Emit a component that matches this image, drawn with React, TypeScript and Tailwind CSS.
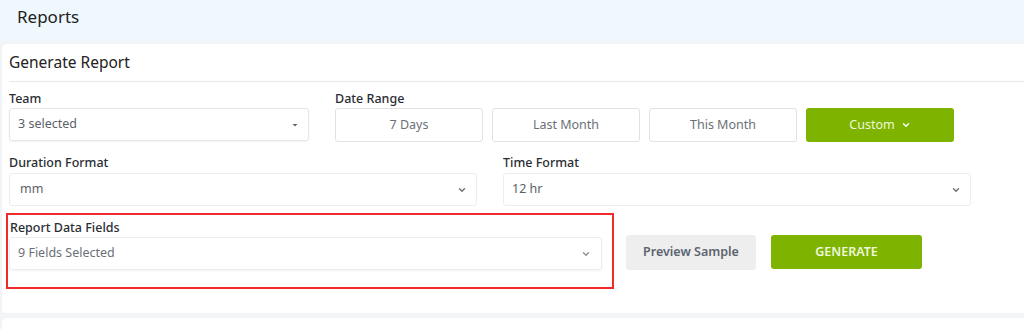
import React from "react";

const Chevron = ({ className = "" }: { className?: string }) => (
  <svg width="10" height="10" viewBox="0 0 10 10" className={className} fill="none" stroke="currentColor" strokeWidth="1.4" strokeLinecap="round" strokeLinejoin="round">
    <path d="M2.5 3.8 L5 6.2 L7.5 3.8" />
  </svg>
);

const Caret = () => (
  <svg width="8" height="8" viewBox="0 0 8 8" className="text-[#5f6670]">
    <path d="M1.5 3 L6.5 3 L4 5.5 Z" fill="currentColor" />
  </svg>
);

export default function App() {
  return (
    <div className="w-[1024px] h-[329px] overflow-hidden bg-[#f1f5f8] font-['Noto_Sans','Open_Sans',sans-serif] text-[#2a2e33]">
      <div className="h-[41px] bg-[#eff8fd] pl-[17px] pt-[5px] text-[17px] leading-[24px] text-[#222]">Reports</div>
      <div className="h-[3px]" />
      <div className="ml-[2px] bg-white rounded-tl-[5px] rounded-bl-[4px] h-[269px]">
        <div className="ml-[7px] h-[38px] flex items-center border-b border-[#e6e8ea] text-[15.5px] text-[#222]">Generate Report</div>
        <div className="pl-[7px] pt-[9px]">
          <div className="flex">
            <div className="w-[300px]">
              <div className="text-[12.5px] font-medium leading-[16px] h-[17px]">Team</div>
              <div className="h-[33px] border border-[#e3e7eb] rounded-[3px] shadow-[0_1px_2px_rgba(0,0,0,0.06)] flex items-center justify-between pl-[8px] pr-[9px] text-[12.5px] text-[#5b6169]">
                <span>3 selected</span>
                <Caret />
              </div>
            </div>
            <div className="ml-[26px]">
              <div className="text-[12.5px] font-medium leading-[16px] h-[17px]">Date Range</div>
              <div className="flex gap-[9px]">
                {["7 Days", "Last Month", "This Month"].map((t) => (
                  <div key={t} className="w-[148px] h-[34px] border border-[#dfe3e7] rounded-[3px] flex items-center justify-center text-[12.5px] text-[#6b7078]">{t}</div>
                ))}
                <div className="w-[148px] h-[34px] bg-[#7eb400] rounded-[3px] flex items-center justify-center gap-[6px] text-[12.5px] text-[#eef7dc]">
                  <span>Custom</span>
                  <Chevron className="text-white" />
                </div>
              </div>
            </div>
          </div>

          <div className="flex mt-[12px] gap-[26px]">
            <div className="w-[468px]">
              <div className="text-[12.5px] font-medium leading-[16px] h-[19px] pt-[1px]">Duration Format</div>
              <div className="h-[33px] border border-[#e9edf1] rounded-[3px] flex items-center justify-between pl-[10px] pr-[9px] text-[12.5px] text-[#5b6169]">
                <span>mm</span>
                <Chevron className="text-[#6b7078]" />
              </div>
            </div>
            <div className="w-[468px]">
              <div className="text-[12.5px] font-medium leading-[16px] h-[19px] pt-[1px]">Time Format</div>
              <div className="h-[33px] border border-[#e9edf1] rounded-[3px] flex items-center justify-between pl-[8px] pr-[9px] text-[12.5px] text-[#5b6169]">
                <span>12 hr</span>
                <Chevron className="text-[#6b7078]" />
              </div>
            </div>
          </div>

          <div className="flex items-start mt-[7px] -ml-[3px]">
            <div className="w-[608px] h-[76px] border-2 border-[#ee2a2a] pl-[1px] pt-[5px]">
              <div className="text-[12.5px] font-medium leading-[16px] h-[17px] pl-[1px]">Report Data Fields</div>
              <div className="w-[593px] h-[33px] border border-[#e9edf1] rounded-[3px] shadow-[0_1px_2px_rgba(0,0,0,0.05)] flex items-center justify-between pl-[8px] pr-[10px] text-[12.5px] text-[#6b7078]">
                <span>9 Fields Selected</span>
                <Chevron className="text-[#8a9098]" />
              </div>
            </div>
            <div className="ml-[12px] mt-[22px] w-[130px] h-[35px] bg-[#eeeeee] rounded-[3px] flex items-center justify-center text-[12.5px] font-semibold text-[#5c6470]">Preview Sample</div>
            <div className="ml-[15px] mt-[22px] w-[151px] h-[34px] bg-[#7eb400] rounded-[3px] flex items-center justify-center text-[12.5px] font-semibold text-[#eef7dc]">GENERATE</div>
          </div>
        </div>
      </div>
      <div className="h-[5px]" />
      <div className="ml-[2px] bg-white h-[20px] rounded-tl-[4px]" />
    </div>
  );
}
